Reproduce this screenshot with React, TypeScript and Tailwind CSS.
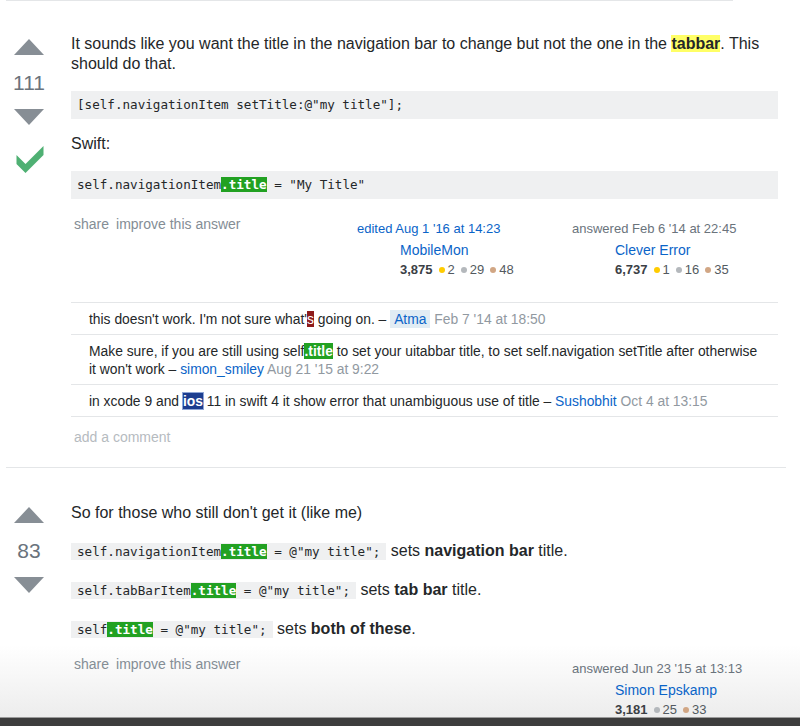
import React from "react";

const UpArrow = () => (
  <svg width="30" height="16" viewBox="0 0 30 16" className="block">
    <path d="M0 16L15 0l15 16z" fill="#878e95" />
  </svg>
);

const DownArrow = () => (
  <svg width="30" height="16" viewBox="0 0 30 16" className="block">
    <path d="M0 0h30L15 16z" fill="#878e95" />
  </svg>
);

const Check = () => (
  <svg width="28" height="27" viewBox="6 6 24 24" className="block">
    <path d="M6 14l8 8L30 6v8L14 30l-8-8v-8z" fill="#4fb073" />
  </svg>
);

const Hit = ({ children }: { children: React.ReactNode }) => (
  <span className="bg-[#22a122] text-white font-bold">{children}</span>
);

const Dot = ({ color }: { color: string }) => (
  <span className={`inline-block w-[6px] h-[6px] rounded-full mr-[3px] ml-[6px] align-middle relative -top-px ${color}`} />
);

const UserCard = ({
  action,
  actionBlue,
  name,
  rep,
  gold,
  silver,
  bronze,
}: {
  action: string;
  actionBlue?: boolean;
  name: string;
  rep: string;
  gold?: string;
  silver?: string;
  bronze?: string;
}) => (
  <div className="w-[200px] px-[7px] pt-[4px]">
    <div className={`text-[13px] leading-[17px] ${actionBlue ? "text-[#0a64c8]" : "text-[#6a737c]"}`}>{action}</div>
    <div className="flex mt-[5px]">
      <div className="w-[32px] h-[32px] shrink-0" />
      <div className="ml-[11px]">
        <div className="text-[14px] leading-[17px] text-[#0a64c8] whitespace-nowrap">{name}</div>
        <div className="mt-[2px] text-[13px] leading-[17px] text-[#535a60] whitespace-nowrap">
          <span className="font-bold text-[#3b4045]">{rep}</span>
          {gold && (
            <>
              <Dot color="bg-[#ffcc01]" />
              {gold}
            </>
          )}
          {silver && (
            <>
              <Dot color="bg-[#b4b8bc]" />
              {silver}
            </>
          )}
          {bronze && (
            <>
              <Dot color="bg-[#d1a684]" />
              {bronze}
            </>
          )}
        </div>
      </div>
    </div>
  </div>
);

const PostMenu = () => (
  <div className="flex gap-[7px] pl-[3px] text-[14px] leading-[17px] text-[#848d95]">
    <span>share</span>
    <span>improve this answer</span>
  </div>
);

const Votes = ({ count, accepted, top }: { count: string; accepted?: boolean; top: string }) => (
  <div className={`w-[30px] ml-[14px] shrink-0 flex flex-col items-center ${top}`}>
    <UpArrow />
    <div className="mt-[16px] text-[21px] leading-[24px] text-[#6a737c]">{count}</div>
    <div className="mt-[14px]">
      <DownArrow />
    </div>
    {accepted && (
      <div className="mt-[21px] pl-[2px]">
        <Check />
      </div>
    )}
  </div>
);

const mono = "font-['DejaVu_Sans_Mono',Menlo,monospace] text-[12.6px]";

export default function App() {
  return (
    <div className="relative w-[800px] h-[726px] overflow-hidden text-[#242729] font-['Liberation_Sans',Arial,sans-serif] bg-[linear-gradient(to_bottom,#ffffff_645px,#ededed_716px)]">
      <div className="ml-[6px] w-[727px] h-px bg-[#e4e6e8]" />

      {/* first answer */}
      <div className="flex pt-[33px]">
        <Votes count="111" accepted top="pt-[5px]" />
        <div className="ml-[27px] w-[707px]">
          <p className="text-[16px] leading-[20px] mb-[17px]">
            It sounds like you want the title in the navigation bar to change but not the one in the{" "}
            <span className="bg-[#ffff66] font-bold">tabbar</span>. This should do that.
          </p>
          <pre className={`${mono} leading-[16px] bg-[#eff0f1] px-[6px] py-[6px] mb-[15px]`}>
            [self.navigationItem setTitle:@"my title"];
          </pre>
          <p className="text-[16px] leading-[20px] mb-[17px]">Swift:</p>
          <pre className={`${mono} leading-[16px] bg-[#eff0f1] px-[6px] py-[6px] mb-[17px]`}>
            self.navigationItem<Hit>.title</Hit> = "My Title"
          </pre>

          <div className="flex justify-between">
            <PostMenu />
            <div className="flex gap-[15px] mr-[13px]">
              <UserCard action="edited Aug 1 '16 at 14:23" actionBlue name="MobileMon" rep="3,875" gold="2" silver="29" bronze="48" />
              <UserCard action="answered Feb 6 '14 at 22:45" name="Clever Error" rep="6,737" gold="1" silver="16" bronze="35" />
            </div>
          </div>

          <div className="mt-[24px] border-t border-[#e4e6e8] text-[13.85px] leading-[18px]">
            <div className="border-b border-[#e4e6e8] py-[6.5px] pl-[18px] pr-[16px]">
              this doesn't work. I'm not sure what'<span className="bg-[#8e1b1b] text-white">s</span> going on. –{" "}
              <span className="bg-[#e1ecf4] text-[#0a64c8] px-[4px] py-[1px]">Atma</span>{" "}
              <span className="text-[#9199a1]">Feb 7 '14 at 18:50</span>
            </div>
            <div className="border-b border-[#e4e6e8] py-[6.5px] pl-[18px] pr-[16px]">
              Make sure, if you are still using self<Hit>.title</Hit> to set your uitabbar title, to set self.navigation setTitle after otherwise it won't work –{" "}
              <span className="text-[#0a64c8]">simon_smiley</span>{" "}
              <span className="text-[#9199a1]">Aug 21 '15 at 9:22</span>
            </div>
            <div className="border-b border-[#e4e6e8] py-[6.5px] pl-[18px] pr-[16px]">
              in xcode 9 and <span className="bg-[#1c3d8f] text-white font-bold outline outline-[#8fa6d6]">ios</span> 11 in swift 4 it show error that unambiguous use of title –{" "}
              <span className="text-[#0a64c8]">Sushobhit</span>{" "}
              <span className="text-[#9199a1]">Oct 4 at 13:15</span>
            </div>
          </div>
          <div className="mt-[12px] pl-[3px] text-[14px] leading-[17px] text-[#b6bbbf]">add a comment</div>
        </div>
      </div>

      <div className="mt-[21px] ml-[6px] w-[780px] h-px bg-[#e4e6e8]" />

      {/* second answer */}
      <div className="flex pt-[35px]">
        <Votes count="83" top="pt-[4px]" />
        <div className="ml-[27px] w-[707px] text-[16px] leading-[20px]">
          <p className="mb-[18px]">So for those who still don't get it (like me)</p>
          <p className="mb-[18px]">
            <code className={`${mono} bg-[#eff0f1] px-[6px] py-[1px]`}>
              self.navigationItem<Hit>.title</Hit> = @"my title";
            </code>{" "}
            sets <b>navigation bar</b> title.
          </p>
          <p className="mb-[18px]">
            <code className={`${mono} bg-[#eff0f1] px-[6px] py-[1px]`}>
              self.tabBarItem<Hit>.title</Hit> = @"my title";
            </code>{" "}
            sets <b>tab bar</b> title.
          </p>
          <p className="mb-[16px]">
            <code className={`${mono} bg-[#eff0f1] px-[6px] py-[1px]`}>
              self<Hit>.title</Hit> = @"my title";
            </code>{" "}
            sets <b>both of these</b>.
          </p>

          <div className="flex justify-between">
            <PostMenu />
            <div className="flex mr-[13px]">
              <UserCard action="answered Jun 23 '15 at 13:13" name="Simon Epskamp" rep="3,181" silver="25" bronze="33" />
            </div>
          </div>
        </div>
      </div>

      {/* window edge */}
      <div className="absolute left-0 right-0 bottom-0 h-[9px] bg-[#3d3d3d] border-t border-[#9a9a9a]" />
    </div>
  );
}
